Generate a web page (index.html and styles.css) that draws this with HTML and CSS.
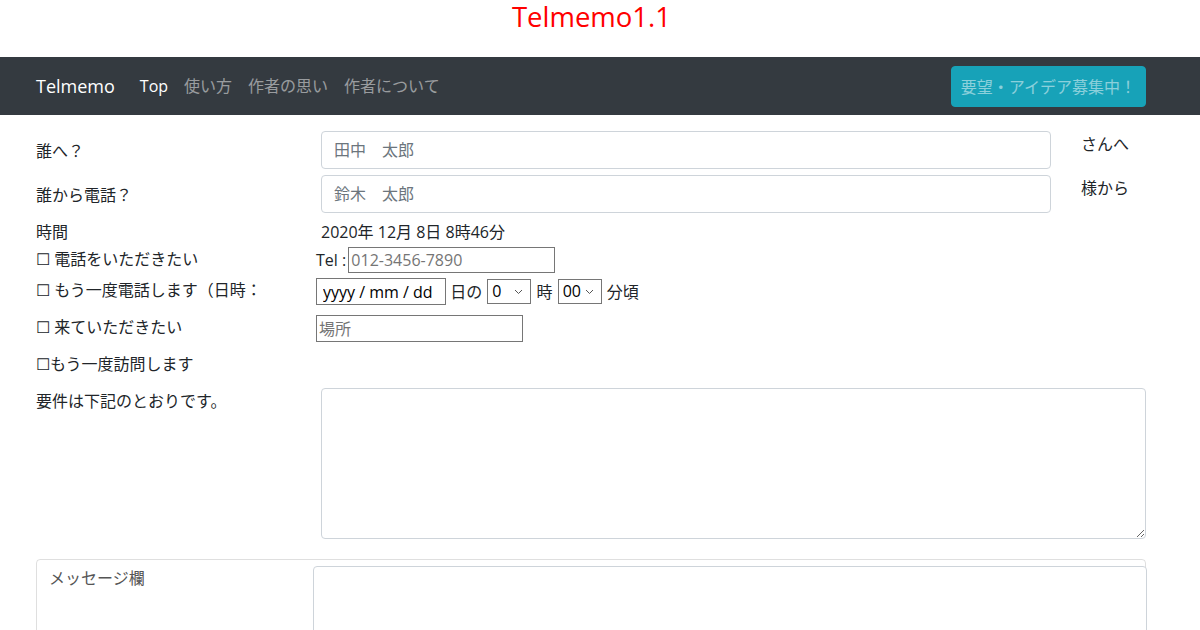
FILE: index.html
```html
<!DOCTYPE html>
<html lang="ja">
<head>
<meta charset="utf-8">
<title>Telmemo</title>
<link rel="stylesheet" href="styles.css">
</head>
<body>
<h1 class="title">Telmemo1.1</h1>
<nav class="navbar">
  <div class="nav-inner">
    <a class="brand" href="#">Telmemo</a>
    <ul class="nav-links">
      <li><a class="nav-link active" href="#">Top</a></li>
      <li><a class="nav-link" href="#">使い方</a></li>
      <li><a class="nav-link" href="#">作者の思い</a></li>
      <li><a class="nav-link" href="#">作者について</a></li>
    </ul>
    <a class="btn-info" href="#">要望・アイデア募集中！</a>
  </div>
</nav>
<main class="container">
  <div class="row row-to">
    <label class="col-label">誰へ？</label>
    <input class="form-control" type="text" placeholder="田中　太郎">
    <span class="suffix">さんへ</span>
  </div>
  <div class="row row-from">
    <label class="col-label">誰から電話？</label>
    <input class="form-control" type="text" placeholder="鈴木　太郎">
    <span class="suffix">様から</span>
  </div>
  <div class="row row-time">
    <span class="col-label">時間</span>
    <span class="time-value">2020年 12月 8日 8時46分</span>
  </div>
  <div class="row row-check row-tel">
    <span class="col-label">☐ 電話をいただきたい</span>
    <span class="inline-field">Tel : <input class="plain-input tel-input" type="text" placeholder="012-3456-7890"></span>
  </div>
  <div class="row row-check row-recall">
    <span class="col-label">☐ もう一度電話します（日時：</span>
    <span class="inline-field"><input class="plain-input date-input" type="text" placeholder="yyyy / mm / dd"> 日の <select class="plain-select sel-hour"><option>0</option></select> 時 <select class="plain-select sel-min"><option>00</option></select> 分頃</span>
  </div>
  <div class="row row-check row-visit">
    <span class="col-label">☐ 来ていただきたい</span>
    <span class="inline-field"><input class="plain-input place-input" type="text" placeholder="場所"></span>
  </div>
  <div class="row row-check row-revisit">
    <span class="col-label">☐もう一度訪問します</span>
  </div>
  <div class="row row-body">
    <label class="col-label">要件は下記のとおりです。</label>
    <textarea class="form-control body-area"></textarea>
  </div>
  <div class="card">
    <span class="card-label">メッセージ欄</span>
    <textarea class="form-control message-area"></textarea>
  </div>
</main>
</body>
</html>
```
FILE: styles.css
```css
* { box-sizing: border-box; }
html, body { margin: 0; padding: 0; }
body {
  font-family: "Open Sans", "Noto Sans CJK JP", sans-serif;
  font-size: 16px;
  line-height: 1.5;
  color: #212529;
  background: #fff;
  overflow: hidden;
}
.title {
  margin: 0;
  height: 57px;
  padding: 1px 17px 0 0;
  text-align: center;
  color: #ff0000;
  font-weight: 400;
  font-size: 27.5px;
  line-height: 31px;
}
.navbar {
  background: #343a40;
  height: 58px;
}
.nav-inner {
  width: 1110px;
  margin-left: 36px;
  height: 58px;
  display: flex;
  align-items: center;
}
.brand {
  color: #fff;
  font-size: 18px;
  text-decoration: none;
  margin-right: 17px;
}
.nav-links {
  display: flex;
  list-style: none;
  margin: 0;
  padding: 0;
  flex: 1;
}
.nav-link {
  display: block;
  padding: 8px;
  color: rgba(255,255,255,.5);
  text-decoration: none;
}
.nav-link.active { color: #fff; }
.btn-info {
  background: #17a2b8;
  border: 1px solid #17a2b8;
  border-radius: 4px;
  color: rgba(255,255,255,.5);
  text-decoration: none;
  padding: 8px 9px;
  line-height: 24px;
  height: 41px;
}
.container {
  width: 1110px;
  margin-left: 36px;
  padding-top: 16px;
}
.row {
  display: grid;
  grid-template-columns: 255px 730px 65px;
  column-gap: 30px;
  align-items: start;
}
.col-label { display: block; }
.row-to, .row-from { height: 44px; }
.row-to .col-label, .row-from .col-label { padding-top: 8px; }
.suffix { padding-top: 1px; }
.form-control {
  display: block;
  width: 100%;
  height: 38px;
  padding: 6px 12px;
  font: inherit;
  color: #495057;
  background: #fff;
  border: 1px solid #ced4da;
  border-radius: 4px;
}
.form-control::placeholder { color: #6c757d; }
.row-time { height: 28px; padding-top: 1px; }
.row-check { grid-template-columns: 255px 1fr; column-gap: 25px; }
.row-tel { height: 31px; }
.row-recall { height: 37px; }
.row-visit { height: 37px; }
.row-revisit { height: 36px; }
.row-check .col-label { line-height: 24px; }
.inline-field {
  display: flex;
  align-items: center;
  white-space: pre;
}
.plain-input {
  font: inherit;
  font-size: 16px;
  height: 27px;
  padding: 1px 2px;
  border: 1px solid #767676;
  border-radius: 0;
  color: #000;
}
.plain-input::placeholder { color: #757575; }
.tel-input { width: 207px; height: 26px; margin-left: -2px; }
.date-input { width: 130px; padding-left: 6px; }
.date-input::placeholder { color: #000; }
.place-input { width: 207px; }
.plain-select {
  -webkit-appearance: none;
  appearance: none;
  font: inherit;
  height: 25px;
  line-height: 23px;
  border: 1px solid #767676;
  border-radius: 0;
  background: #fff url("data:image/svg+xml,%3Csvg xmlns='http://www.w3.org/2000/svg' width='9' height='6' viewBox='0 0 9 6'%3E%3Cpath d='M1 1l3.5 3.5L8 1' fill='none' stroke='%23555' stroke-width='1'/%3E%3C/svg%3E") no-repeat right 7px center;
  padding: 0 0 0 4px;
  color: #000;
  width: 44px;
  margin: 0 1px;
}
.row-body { grid-template-columns: 255px 825px; height: 171px; }
.row-body .col-label { padding-top: 1px; }
.body-area { height: 151px; resize: vertical; }
.card {
  display: grid;
  grid-template-columns: 263px 834px;
  border: 1px solid rgba(0,0,0,.125);
  border-radius: 4px;
  padding: 6px 0 0 13px;
  height: 100px;
  width: 1110px;
}
.card-label {
  color: #555;
  padding-left: 0;
  margin-left: -1px;
}
.message-area { height: 120px; }
```
